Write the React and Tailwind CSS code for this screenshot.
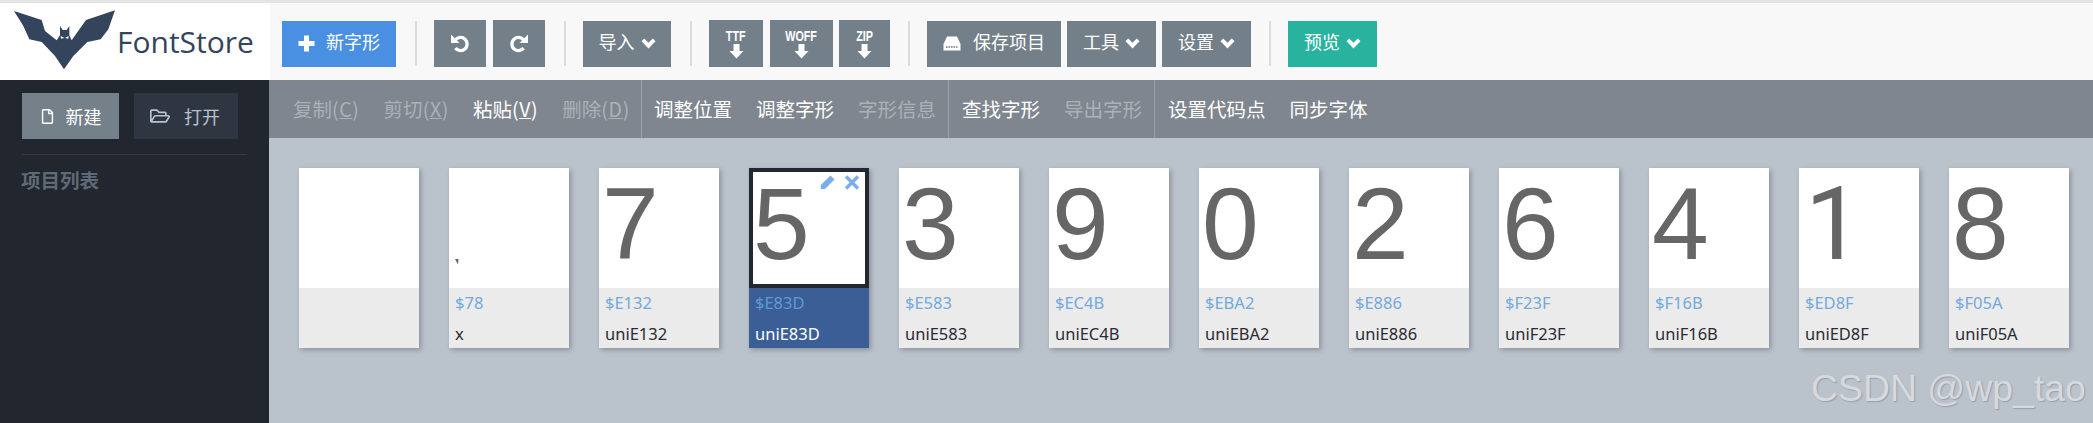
import React from 'react';
import { FaRegFile, FaRegFolderOpen } from 'react-icons/fa';

const CJK = { fontFamily: '"Noto Sans CJK SC", "Liberation Sans", sans-serif' };

const Chevron = () => (
  <svg width="15" height="11" viewBox="0 0 15 11" className="shrink-0">
    <path d="M0.5 3.2 L3.2 0.5 L7.5 4.8 L11.8 0.5 L14.5 3.2 L7.5 10.5 Z" fill="#fff" />
  </svg>
);

const ArrowDown = () => (
  <svg width="15" height="15" viewBox="0 0 15 15" className="block">
    <path d="M4.5 0 H10.5 V7 H14.5 L7.5 14.5 L0.5 7 H4.5 Z" fill="#fff" />
  </svg>
);

const Hdd = () => (
  <svg width="18" height="15" viewBox="0 0 18 15" className="shrink-0">
    <path d="M4 0.5 H14 L17.5 8 V14.5 H0.5 V8 Z" fill="#fff" />
    <path d="M3 11 H15" stroke="#8b96a0" strokeWidth="2" strokeDasharray="1.5 1" />
  </svg>
);

const Plus = () => (
  <svg width="17" height="17" viewBox="0 0 17 17" className="shrink-0">
    <path d="M6 0.5 H11 V6 H16.5 V11 H11 V16.5 H6 V11 H0.5 V6 H6 Z" fill="#fff" />
  </svg>
);

const Undo = ({ flip }) => (
  <svg width="20" height="20" viewBox="0 0 20 20" className={flip ? 'shrink-0 -scale-x-100' : 'shrink-0'}>
    <path d="M5.6 6.6 A6.6 6.6 0 1 1 5.4 15.2" fill="none" stroke="#fff" strokeWidth="3.4" />
    <path d="M1 1.5 V10 H9.5 Z" fill="#fff" />
  </svg>
);

const Sep = () => <div className="w-[2px] h-[45px] bg-[#dcdcdc] shrink-0" />;

const Btn = ({ w, bg = 'bg-[#737f89]', children, cls = 'h-[46px]' }) => (
  <div className={`${w} ${bg} shrink-0 flex items-center justify-center gap-[6px] pb-[1px] text-white text-[18px] [&>span]:-translate-y-[2px] ${cls}`} style={CJK}>
    {children}
  </div>
);

const Dl = ({ w, label, ml }) => (
  <div className={`${w} ${ml} h-[47px] -mt-px bg-[#737f89] shrink-0 flex flex-col items-center justify-center text-white`}>
    <span className="block h-[16px] leading-[16px] text-[15px] font-bold scale-x-[0.72]" style={{ fontFamily: '"Liberation Sans", sans-serif' }}>{label}</span>
    <ArrowDown />
  </div>
);

const Tool = ({ text, u, on }) => (
  <span className={`px-[12px] whitespace-nowrap text-[19.5px] ${on ? 'text-white' : 'text-[#acb1b7]'}`} style={CJK}>
    {text}
    {u && <span className="tracking-[0.65px]">(<span className="underline">{u}</span>)</span>}
  </span>
);

const glyphs = [
  ['', '', ''],
  ['`', '$78', 'x'],
  ['7', '$E132', 'uniE132'],
  ['5', '$E83D', 'uniE83D'],
  ['3', '$E583', 'uniE583'],
  ['9', '$EC4B', 'uniEC4B'],
  ['0', '$EBA2', 'uniEBA2'],
  ['2', '$E886', 'uniE886'],
  ['6', '$F23F', 'uniF23F'],
  ['4', '$F16B', 'uniF16B'],
  ['1', '$ED8F', 'uniED8F'],
  ['8', '$F05A', 'uniF05A'],
];

const Card = ({ ch, code, name }) => {
  const sel = code === '$E83D';
  const tick = ch === '`';
  const label = { fontFamily: '"Noto Sans", sans-serif' };
  return (
    <div className={`w-[120px] h-[180px] shrink-0 flex flex-col shadow-[2px_2px_5px_rgba(0,0,0,0.25)] ${sel ? 'bg-[#3b5e97]' : 'bg-[#ebebeb]'}`} style={{ fontFamily: '"Liberation Sans", sans-serif' }}>
      <div className={`relative h-[120px] bg-white text-[#666] text-[102px] ${sel ? 'border-4 border-[#232830] pl-0 leading-[104px]' : 'pl-[3px] leading-[112px]'}`}>
        {tick ? (
          <svg width="4" height="6" viewBox="0 0 4 6" className="block ml-[3px] mt-[91px]"><path d="M0 0 H3.5 L3 5.5 Z" fill="#666" /></svg>
        ) : ch === '1' ? (
          <span className="font-['Roboto'] ml-[3px]">1</span>
        ) : ch}
        {sel && (
          <div className="absolute top-[3px] right-[5px] flex items-center gap-[9px]">
            <svg width="15" height="15" viewBox="0 0 15 15"><path d="M10.5 0.5 L14.5 4.5 L5 14 H0.8 V10 Z" fill="#7aaee8" /></svg>
            <svg width="16" height="15" viewBox="0 0 16 15"><path d="M2 1.5 L14 13.5 M14 1.5 L2 13.5" stroke="#7aaee8" strokeWidth="3.4" /></svg>
          </div>
        )}
      </div>
      <div className={`pl-[6px] text-[16.5px] leading-[30px] h-[30px] ${sel ? 'text-[#5b9bd5]' : 'text-[#74a9dc]'}`} style={label}>{code}</div>
      <div className={`pl-[6px] pt-[1px] text-[16.5px] leading-[30px] h-[30px] ${sel ? 'text-white' : 'text-[#2b2b33]'}`} style={label}>{name}</div>
    </div>
  );
};

export default function App() {
  return (
    <div className="relative w-[2093px] h-[423px] overflow-hidden flex flex-col bg-[#bac2cc]">
      <div className="h-[3px] bg-[#e4e4e4]" />
      <div className="flex h-[77px] bg-[#f8f8f8]">
        <div className="w-[270px] bg-white flex items-center shrink-0">
          <svg width="120" height="70" viewBox="0 0 360 210" className="ml-[10px] mt-[-1px] shrink-0">
            <path d="M12 15 L95 42 L105 75 L140 103 L150 88 L150 60 L158 72 L170 72 L178 60 L178 88 L185 103 L228 42 L315 13 L295 70 L272 100 L232 108 L190 150 L162 190 L135 150 L95 108 L58 100 L40 60 Z" fill="#34445c" />
            <path d="M152 90 L163 96 L153 98 Z M176 90 L165 96 L175 98 Z" fill="#fff" />
          </svg>
          <span className="ml-[-13px] text-[30px] text-[#34445c]" style={{ fontFamily: '"Open Sans", sans-serif' }}>FontStore</span>
        </div>
        <div className="flex items-start pt-[18px] pl-[12px]">
          <Btn w="w-[114px]" bg="bg-[#4a90e2]" cls="h-[46px] gap-[11px]"><Plus /><span>新字形</span></Btn>
          <div className="ml-[19px]"><Sep /></div>
          <Btn w="w-[52px]" cls="ml-[17px] h-[47px] -mt-px"><Undo /></Btn>
          <Btn w="w-[52px]" cls="ml-[7px] h-[47px] -mt-px"><Undo flip /></Btn>
          <div className="ml-[19px]"><Sep /></div>
          <Btn w="w-[88px]" cls="ml-[17px] h-[46px]"><span>导入</span><Chevron /></Btn>
          <div className="ml-[19px]"><Sep /></div>
          <Dl w="w-[54px]" ml="ml-[17px]" label="TTF" />
          <Dl w="w-[63px]" ml="ml-[7px]" label="WOFF" />
          <Dl w="w-[51px]" ml="ml-[6px]" label="ZIP" />
          <div className="ml-[18px]"><Sep /></div>
          <Btn w="w-[134px]" cls="ml-[17px] h-[46px] gap-[12px]"><Hdd /><span>保存项目</span></Btn>
          <Btn w="w-[89px]" cls="ml-[6px] h-[46px]"><span>工具</span><Chevron /></Btn>
          <Btn w="w-[89px]" cls="ml-[6px] h-[46px]"><span>设置</span><Chevron /></Btn>
          <div className="ml-[18px]"><Sep /></div>
          <Btn w="w-[89px]" bg="bg-[#27b39e]" cls="ml-[17px] h-[46px]"><span>预览</span><Chevron /></Btn>
        </div>
      </div>
      <div className="flex flex-1 min-h-0">
        <aside className="w-[269px] bg-[#22262f] shrink-0 pl-[22px] pr-[22px] pt-[13px]">
          <div className="flex gap-[15px]">
            <div className="w-[97px] h-[46px] bg-[#74808a] flex items-center justify-center gap-[11px] text-white text-[18px]" style={CJK}><FaRegFile size={15} color="#fff" /><span>新建</span></div>
            <div className="w-[104px] h-[46px] bg-[#303641] flex items-center justify-center gap-[14px] pr-[2px] text-[#b6c4d0] text-[18px]" style={CJK}><FaRegFolderOpen size={20} color="#b6c4d0" /><span>打开</span></div>
          </div>
          <div className="mt-[15px] h-px bg-[#343a44]" />
          <div className="mt-[11px] -ml-px text-[19.5px] leading-[28px] font-bold text-[#5f6a76]" style={CJK}>项目列表</div>
        </aside>
        <main className="flex-1 flex flex-col min-w-0">
          <div className="h-[58px] bg-[#7f8690] flex items-stretch shrink-0">
            <div className="flex items-center pl-[12px] w-[373px] border-r border-[#99a0a8]">
              <Tool text="复制" u="C" />
              <Tool text="剪切" u="X" />
              <Tool text="粘贴" u="V" on />
              <Tool text="删除" u="D" />
            </div>
            <div className="flex items-center pl-0 w-[307px] border-r border-[#99a0a8]">
              <Tool text="调整位置" on />
              <Tool text="调整字形" on />
              <Tool text="字形信息" />
            </div>
            <div className="flex items-center pl-[1px] w-[206px] border-r border-[#99a0a8]">
              <Tool text="查找字形" on />
              <Tool text="导出字形" />
            </div>
            <div className="flex items-center pl-[1px]">
              <Tool text="设置代码点" on />
              <Tool text="同步字体" on />
            </div>
          </div>
          <div className="flex-1 flex items-start gap-[30px] pl-[30px] pt-[30px] overflow-hidden">
            {glyphs.map(([ch, code, name], i) => <Card key={i} ch={ch} code={code} name={name} />)}
          </div>
        </main>
      </div>
      <div className="absolute left-[1811px] top-[364px] text-[37.4px] leading-[48px] whitespace-nowrap text-[#d6d9dd]" style={{ fontFamily: '"Liberation Sans", sans-serif', textShadow: '1px 1px 1px rgba(120,125,135,0.5)' }}>CSDN @wp_tao</div>
    </div>
  );
}
